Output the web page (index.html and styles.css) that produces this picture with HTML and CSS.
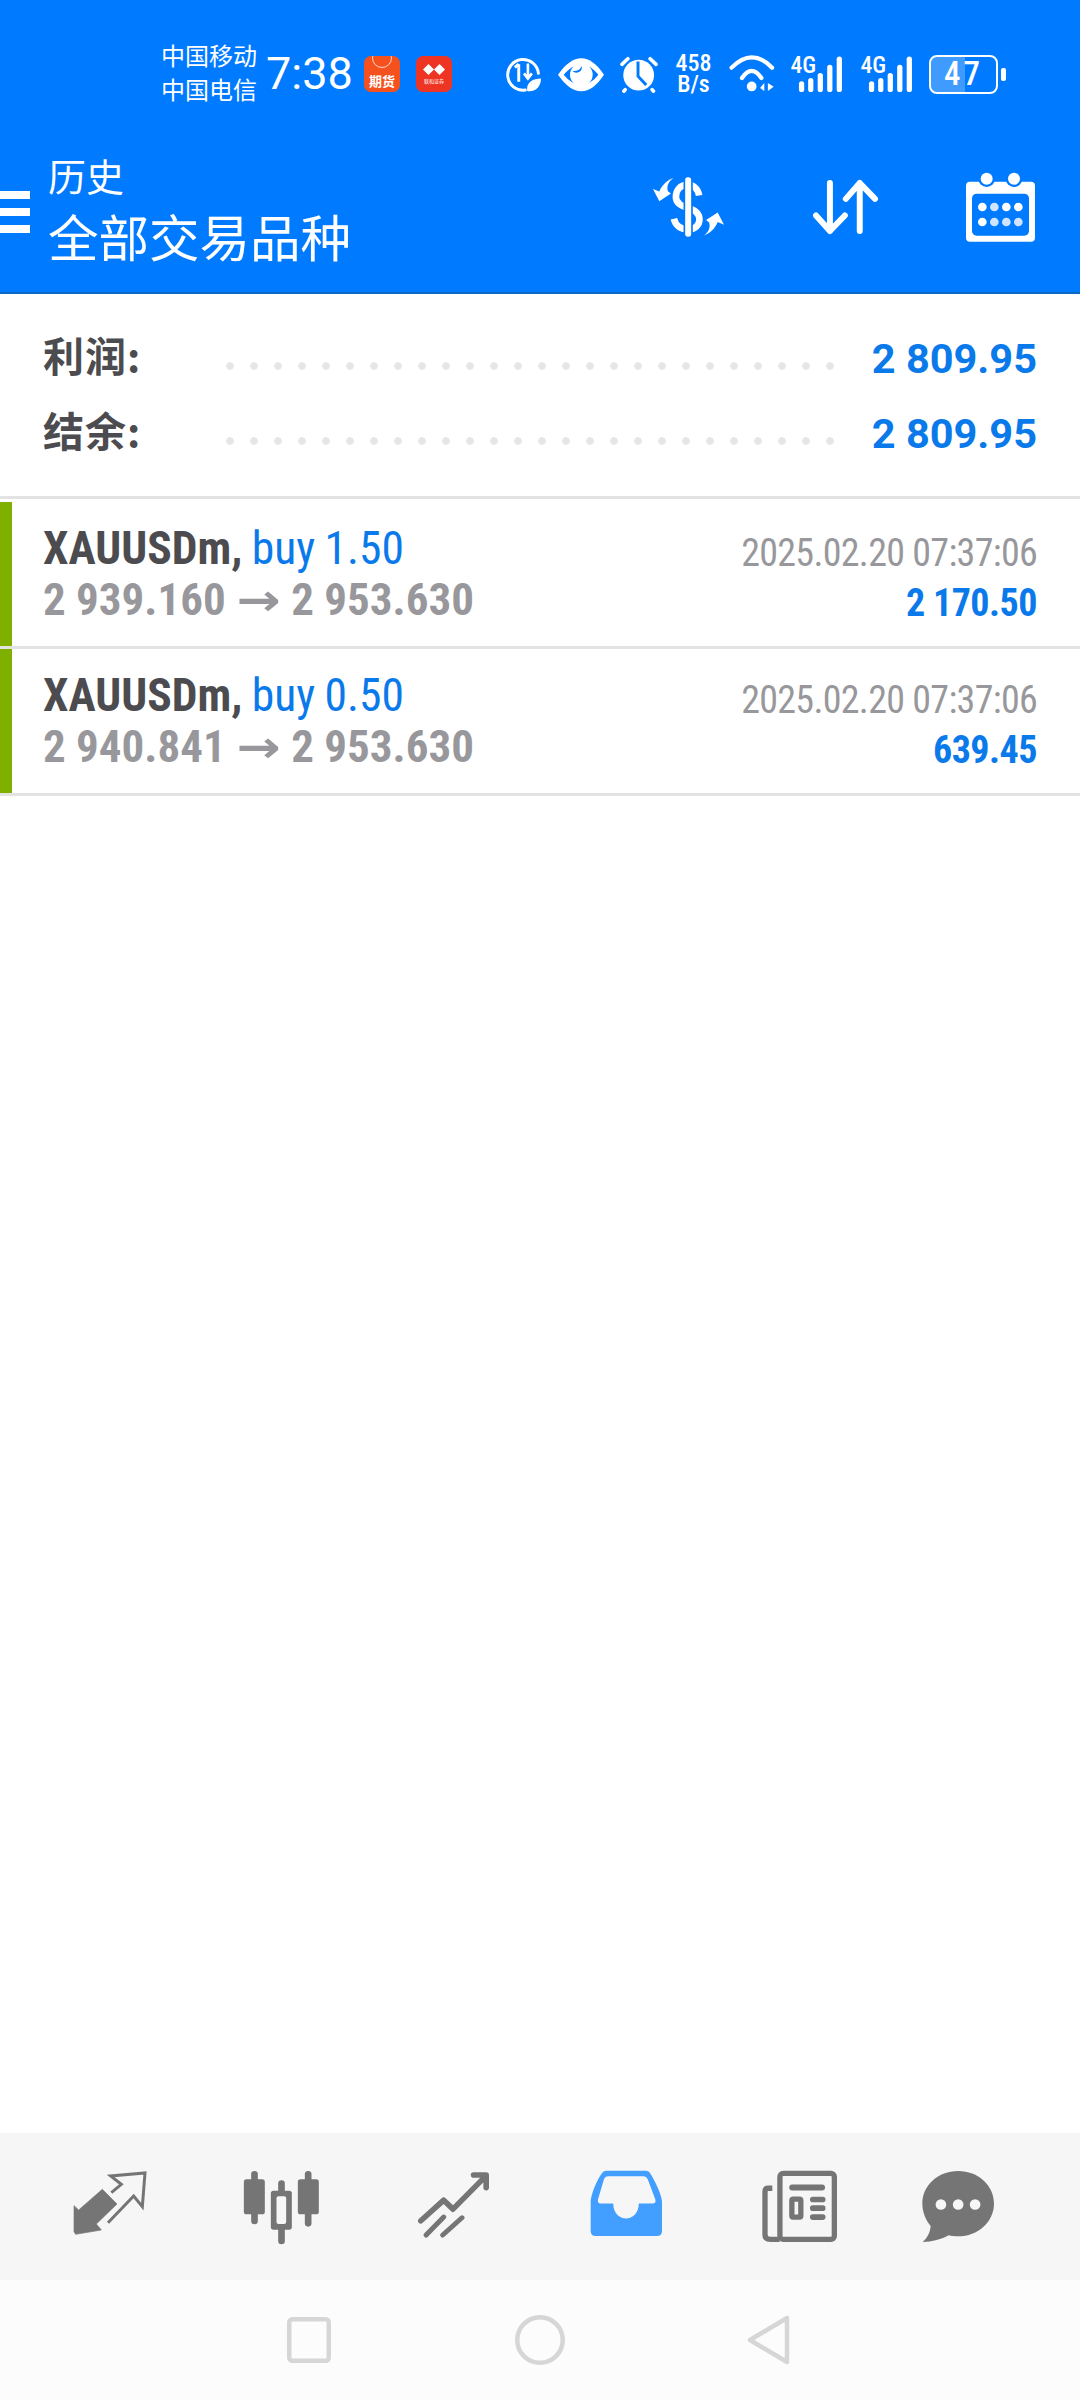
FILE: index.html
```html
<!DOCTYPE html>
<html lang="zh">
<head>
<meta charset="utf-8">
<title>历史</title>
<link rel="stylesheet" href="styles.css">
</head>
<body>
<div class="screen">
  <header class="header">
    <div class="status">
      <div class="carriers"><span>中国移动</span><span>中国电信</span></div>
      <div class="clock">7:38</div>
      <div class="chip chip-orange"><span class="chip-ring"></span><span class="chip-text">期货</span></div>
      <div class="chip chip-red">
        <svg class="chip-logo" viewBox="0 0 24 12"><path d="M0 6 6 0l6 6-6 6zM12 6l6-6 6 6-6 6z" fill="#fff"/></svg>
        <span class="chip-small">联和证券</span>
      </div>
      <div class="sys">
        <svg class="s-saver" viewBox="50 105 110 110"><path d="M112 209A47 47 0 1 1 152 158" fill="none" stroke="#fff" stroke-width="9" stroke-linecap="round"/><path d="M92 130V184M80 140 92 130" fill="none" stroke="#fff" stroke-width="9"/><path d="M120 128V172M108 158 120 174 132 158" fill="none" stroke="#fff" stroke-width="8"/><path d="M118 212C114 188 132 174 160 174 160 200 142 216 118 212Z" fill="#fff"/></svg>
        <svg class="s-eye" viewBox="202 105 144 105"><path d="M205 158C250 92 300 92 343 158 300 224 250 224 205 158Z" fill="#fff"/><path d="M222 158C255 118 295 118 326 158 295 198 255 198 222 158Z" fill="#007aff"/><circle cx="275" cy="158" r="34" fill="#fff"/><path d="M248 146A16 16 0 0 0 276 132 22 22 0 0 1 248 146Z" fill="#007aff"/></svg>
        <svg class="s-alarm" viewBox="388 102 116 112"><circle cx="445" cy="160" r="47" fill="#fff"/><path d="M443 118V163L468 190" fill="none" stroke="#007aff" stroke-width="9"/><path d="M394 127 412 110M480 110 498 127M404 204 400 209M486 204 490 209" fill="none" stroke="#fff" stroke-width="11" stroke-linecap="round"/></svg>
        <div class="speed"><span>458</span><span>B/s</span></div>
        <svg class="s-wifi" viewBox="712 98 142 117"><path d="M720 140Q782 76 845 140M752 172Q782 128 812 172" fill="none" stroke="#fff" stroke-width="13" stroke-linecap="round"/><circle cx="782" cy="198" r="15" fill="#fff"/><path d="M808 203 821 187V212ZM832 187 850 199 832 212Z" fill="#fff"/></svg>
        <svg class="s-net" viewBox="892 85 164 131"><text x="893" y="156" class="net-label">4G</text><g fill="#fff"><rect x="919" y="180" width="16" height="33" rx="8"/><rect x="947" y="170" width="16" height="43" rx="8"/><rect x="976" y="155" width="16" height="58" rx="8"/><rect x="1005" y="130" width="16" height="83" rx="8"/><rect x="1034" y="105" width="16" height="108" rx="8"/></g></svg>
        <svg class="s-net" viewBox="892 85 164 131"><text x="893" y="156" class="net-label">4G</text><g fill="#fff"><rect x="919" y="180" width="16" height="33" rx="8"/><rect x="947" y="170" width="16" height="43" rx="8"/><rect x="976" y="155" width="16" height="58" rx="8"/><rect x="1005" y="130" width="16" height="83" rx="8"/><rect x="1034" y="105" width="16" height="108" rx="8"/></g></svg>
        <div class="battery"><div class="battery-body"><span class="battery-fill"></span><span class="battery-num">47</span></div><span class="battery-nub"></span></div>
      </div>
    </div>
    <div class="appbar">
      <div class="burger"><span></span><span></span><span></span></div>
      <div class="titles">
        <div class="title-small">历史</div>
        <div class="title-large">全部交易品种</div>
      </div>
      <div class="actions">
        <svg class="a-dollar" viewBox="100 90 220 185"><path d="M242 148C238 125 222 116 208 116 182 116 172 135 172 152 172 172 190 180 209 185 232 192 243 202 243 220 243 238 228 250 209 250 185 250 170 236 166 218" fill="none" stroke="#fff" stroke-width="20"/><rect x="195" y="90" width="28" height="185" fill="#007aff"/><rect x="200" y="93" width="18" height="179" rx="8" fill="#fff"/><path d="M165 95C150 105 143 120 148 135L157 142 122 165 103 128 122 136C130 115 148 100 165 95Z" fill="#fff"/><path d="M165 95C150 105 143 120 148 135L157 142 122 165 103 128 122 136C130 115 148 100 165 95Z" fill="#fff" transform="rotate(180 210 182)"/></svg>
        <svg class="a-sort" viewBox="575 95 208 175"><path d="M632 110V255M590 208 632 255 677 208M722 255V110M680 158 722 110 768 158" fill="none" stroke="#fff" stroke-width="18" stroke-linecap="round" stroke-linejoin="round"/></svg>
        <svg class="a-cal" viewBox="1038 73 207 210"><rect x="1038" y="102" width="207" height="180" rx="12" fill="#fff"/><rect x="1056" y="138" width="171" height="126" rx="14" fill="#007aff"/><circle cx="1100" cy="93" r="25" fill="#007aff"/><circle cx="1182" cy="93" r="25" fill="#007aff"/><circle cx="1100" cy="93" r="18" fill="#fff"/><circle cx="1182" cy="93" r="18" fill="#fff"/><g fill="#fff"><circle cx="1087" cy="178" r="13"/><circle cx="1159" cy="178" r="13"/><circle cx="1195" cy="178" r="13"/><circle cx="1087" cy="223" r="13"/></g><g fill="#cfe4ff"><circle cx="1123" cy="178" r="13"/><circle cx="1123" cy="223" r="13"/><circle cx="1159" cy="223" r="13"/><circle cx="1195" cy="223" r="13"/></g></svg>
      </div>
    </div>
  </header>

  <section class="summary">
    <div class="sum-row"><span class="sum-label">利润:</span><span class="leader"></span><span class="sum-value">2 809.95</span></div>
    <div class="sum-row"><span class="sum-label">结余:</span><span class="leader"></span><span class="sum-value">2 809.95</span></div>
  </section>

  <section class="trades">
    <article class="trade">
      <span class="bar"></span>
      <div class="trade-body">
        <div class="trade-left">
          <div class="line-a"><b class="sym">XAUUSDm,</b> <span class="side">buy 1.50</span></div>
          <div class="line-b">2 939.160 <span class="arrow">→</span> 2 953.630</div>
        </div>
        <div class="trade-right">
          <div class="when">2025.02.20 07:37:06</div>
          <div class="profit">2 170.50</div>
        </div>
      </div>
    </article>
    <article class="trade">
      <span class="bar"></span>
      <div class="trade-body">
        <div class="trade-left">
          <div class="line-a"><b class="sym">XAUUSDm,</b> <span class="side">buy 0.50</span></div>
          <div class="line-b">2 940.841 <span class="arrow">→</span> 2 953.630</div>
        </div>
        <div class="trade-right">
          <div class="when">2025.02.20 07:37:06</div>
          <div class="profit">639.45</div>
        </div>
      </div>
    </article>
  </section>

  <div class="spacer"></div>

  <nav class="tabs">
    <svg class="tab t1" viewBox="100 160 222 198"><path d="M103 267 117 280 188 218 232 262 170 322 185 340 108 353 103 345Z" fill="#757575" stroke="#757575" stroke-width="2" stroke-linejoin="round"/><path d="M215 228 245 203 213 178 316 169 308 270 282 238 205 318" fill="none" stroke="#757575" stroke-width="9"/></svg>
    <svg class="tab t2" viewBox="610 145 230 225"><g fill="#757575"><rect x="612" y="173" width="63" height="105" rx="8"/><rect x="634" y="148" width="20" height="160" rx="10"/><rect x="774" y="173" width="63" height="105" rx="8"/><rect x="795" y="148" width="20" height="167" rx="10"/><rect x="715" y="176" width="20" height="192" rx="10"/><rect x="693" y="207" width="63" height="117" rx="8"/></g><rect x="710" y="224" width="29" height="83" rx="6" fill="#f6f6f6"/></svg>
    <svg class="tab t3" viewBox="1130 150 222 205"><path d="M1141 303 1210 241 1238 268 1335 170M1300 165H1338V203" fill="none" stroke="#757575" stroke-width="17" stroke-linecap="round" stroke-linejoin="round"/><path d="M1157 346 1210 292M1207 346 1265 294" fill="none" stroke="#757575" stroke-width="15" stroke-linecap="round"/></svg>
    <svg class="tab t4" viewBox="90 154 220 202"><path fill="#429eff" fill-rule="evenodd" d="M92 250C92 230 110 185 125 165Q130 156 140 156H258Q268 156 272 165C285 185 307 230 307 250V338Q307 353 292 353H107Q92 353 92 338ZM145 173Q135 173 132 182L114 243Q112 255 122 255H160C160 315 237 315 237 255H278Q290 255 287 243L264 182Q260 173 252 173Z"/></svg>
    <svg class="tab t5" viewBox="605 145 230 220"><g fill="none" stroke="#757575"><rect x="661" y="155" width="164" height="199" rx="10" stroke-width="16"/><path d="M638 200H626Q616 200 616 210V340Q616 354 632 354H660" stroke-width="16"/><path d="M698 198H788" stroke-width="18" stroke-linecap="round"/><rect x="697" y="233" width="27" height="54" rx="4" stroke-width="16"/><path d="M760 234H790M760 260H790M760 287H790" stroke-width="17" stroke-linecap="round"/></g></svg>
    <svg class="tab t6" viewBox="1085 145 220 218"><path fill="#757575" d="M1194 147C1254 147 1302 190 1302 245 1302 300 1254 344 1194 344 1183 344 1173 343 1165 341 1145 353 1115 361 1087 361 1102 348 1110 330 1111 313 1097 296 1086 272 1086 245 1086 190 1134 147 1194 147Z"/><g fill="#f6f6f6"><circle cx="1142" cy="248" r="16"/><circle cx="1194" cy="248" r="16"/><circle cx="1245" cy="248" r="16"/></g></svg>
  </nav>

  <nav class="softkeys">
    <svg class="key k-square" viewBox="0 0 44 46"><rect x="2.25" y="2.25" width="39.5" height="41.5" rx="3" fill="none" stroke="#d6d6d6" stroke-width="4.5"/></svg>
    <svg class="key k-circle" viewBox="0 0 50 50"><circle cx="25" cy="25" r="22.75" fill="none" stroke="#d6d6d6" stroke-width="4.5"/></svg>
    <svg class="key k-back" viewBox="0 0 44 50"><path d="M40 3 3 25 40 47Z" fill="none" stroke="#d6d6d6" stroke-width="4.5" stroke-linejoin="round"/></svg>
  </nav>
</div>
</body>
</html>
```

FILE: styles.css
```css
* { box-sizing: border-box; }
html, body { margin: 0; padding: 0; }
body { background: #fff; font-family: Roboto, "Noto Sans CJK SC", sans-serif; }
.screen { width: 1080px; height: 2400px; display: flex; flex-direction: column; overflow: hidden; }

.header { height: 294px; background: #007aff; border-bottom: 2px solid #0a6ac8; color: #fff; display: flex; flex-direction: column; flex: none; }
.status { height: 148px; display: flex; align-items: center; padding: 0 74px 0 161px; flex: none; }
.carriers { display: flex; flex-direction: column; font-family: "Noto Sans CJK SC", sans-serif; font-size: 24px; line-height: 34px; width: 97px; margin-top: -4px; }
.clock { font-size: 45px; margin-left: 8px; width: 90px; line-height: 50px; }
.chip { width: 36px; height: 36px; border-radius: 7px; position: relative; overflow: hidden; display: flex; flex-direction: column; align-items: center; flex: none; }
.chip-orange { background: #f4511e; margin-left: 8px; }
.chip-red { background: #ee3524; margin-left: 16px; justify-content: center; gap: 2px; }
.chip-ring { position: absolute; top: -8px; left: 8px; width: 20px; height: 20px; border: 1px solid #ffd9cc; border-radius: 50%; }
.chip-text { position: absolute; top: 16px; left: 5px; font: 700 13px/18px "Noto Sans CJK SC", sans-serif; white-space: nowrap; }
.chip-logo { width: 22px; height: 11px; }
.chip-small { font: 5px/7px "Noto Sans CJK SC", sans-serif; white-space: nowrap; }
.sys { margin-left: auto; display: flex; align-items: center; gap: 15.4px; }
.sys svg { display: block; flex: none; }
.s-saver { width: 36px; height: 36px; }
.s-eye { width: 48px; height: 35px; }
.s-alarm { width: 38px; height: 37px; }
.speed { width: 40px; display: flex; flex-direction: column; align-items: center; font: 500 24px/21px Roboto, sans-serif; font-stretch: 75%; }
.s-wifi { width: 46px; height: 38px; margin-top: -2px; }
.s-net { width: 54px; height: 43px; margin-top: -5px; }
.net-label { font-family: Roboto, sans-serif; font-size: 72px; font-weight: 500; font-stretch: 75%; fill: #fff; }
.battery { display: flex; align-items: center; gap: 3px; width: 77px; flex: none; }
.battery-body { position: relative; width: 69px; height: 39px; border: 2.5px solid #fff; border-radius: 8px; overflow: hidden; display: flex; align-items: center; justify-content: center; flex: none; }
.battery-fill { position: absolute; left: 0; top: 0; bottom: 0; width: 52%; background: rgba(255, 255, 255, .25); }
.battery-num { position: relative; font: 500 33px/34px Roboto, sans-serif; font-stretch: 75%; letter-spacing: 3px; }
.battery-nub { width: 5px; height: 13px; background: #fff; border-radius: 2px; flex: none; }

.appbar { flex: 1; display: flex; align-items: center; padding: 0 45px 26px 0; }
.burger { width: 30px; display: flex; flex-direction: column; gap: 9px; margin-top: 10px; flex: none; }
.burger span { display: block; height: 8px; background: #fff; }
.titles { margin: -5px 0 0 18px; font-family: "Noto Sans CJK SC", sans-serif; }
.title-small { font-size: 38px; line-height: 60px; }
.title-large { font-size: 50.5px; line-height: 60px; }
.actions { margin-left: auto; display: flex; align-items: center; gap: 86px; }
.actions svg { display: block; }
.a-dollar { width: 73px; height: 62px; }
.a-sort { width: 69px; height: 58px; }
.a-cal { width: 69px; height: 70px; }

.summary { padding: 26px 43px 26px; border-bottom: 3px solid #e3e3e3; flex: none; height: 205px; }
.sum-row { height: 75px; display: flex; align-items: center; }
.sum-label { font: 700 41px/75px "Noto Sans CJK SC", sans-serif; letter-spacing: 1px; color: #4c4c50; width: 183px; flex: none; padding-bottom: 6px; }
.leader { flex: 1; height: 8px; margin-top: 16px; margin-right: 26px; background: radial-gradient(circle at 4px 4px, #e6e6e6 3.5px, transparent 4px) 0 0 / 24px 8px repeat-x; }
.sum-value { font: 700 41.5px/75px Roboto, sans-serif; color: #0a7aeb; white-space: nowrap; padding-top: 2px; }

.trades { padding-top: 3px; flex: none; display: flex; flex-direction: column; }
.trade { display: flex; height: 147px; border-bottom: 3px solid #e3e3e3; }
.bar { width: 12px; background: #7fb000; flex: none; }
.trade-body { flex: 1; display: flex; justify-content: space-between; padding: 0 43px 0 31px; }
.trade-left { padding-top: 21px; }
.line-a, .line-b { height: 51px; line-height: 51px; white-space: nowrap; font-stretch: 75%; font-family: Roboto, sans-serif; }
.line-a { font-size: 45.5px; word-spacing: -1px; }
.line-b { font-size: 45px; font-weight: 700; color: #98989c; }
.arrow { display: inline-block; font-family: "DejaVu Sans", sans-serif; font-size: 44px; line-height: 40px; font-weight: 700; font-stretch: normal; margin: 0 4px; transform: scaleX(1.2); }
.sym { font-weight: 700; color: #4c4c50; }
.side { color: #0a7aeb; }
.trade-right { padding-top: 26px; text-align: right; font-family: Roboto, sans-serif; font-stretch: 75%; }
.when { font-size: 38px; letter-spacing: -.7px; line-height: 50px; color: #98989c; white-space: nowrap; }
.profit { font-size: 38px; letter-spacing: -.5px; line-height: 50px; font-weight: 700; color: #0a7aeb; }

.spacer { flex: 1; }

.tabs { height: 147px; background: #f6f6f6; display: flex; align-items: flex-start; flex: none; padding: 37px 0 0 73px; }
.tab { display: block; flex: none; }
.t1 { width: 74px; height: 66px; }
.t2 { width: 77px; height: 75px; margin-left: 96px; }
.t3 { width: 74px; height: 68px; margin-left: 97px; }
.t4 { width: 73px; height: 67px; margin-left: 99px; }
.t5 { width: 77px; height: 73px; margin-left: 98px; }
.t6 { width: 73px; height: 73px; margin-left: 84px; }

.softkeys { height: 120px; background: #fcfcfc; display: flex; align-items: center; flex: none; padding: 0 0 0 287px; }
.key { display: block; flex: none; }
.k-square { width: 44px; height: 46px; }
.k-circle { width: 50px; height: 50px; margin-left: 184px; }
.k-back { width: 44px; height: 50px; margin-left: 182px; }
```
